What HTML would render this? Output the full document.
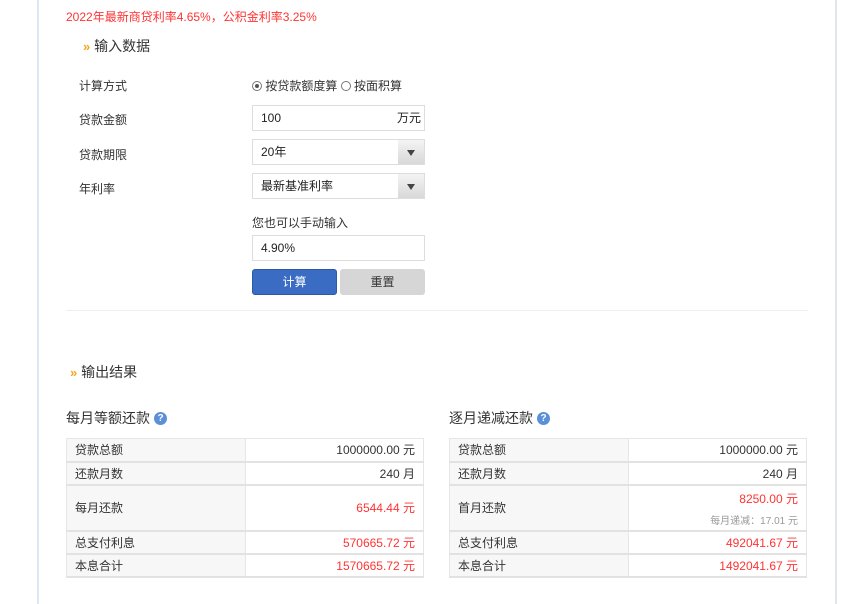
<!DOCTYPE html>
<html><head><meta charset="utf-8"><style>
*{margin:0;padding:0;box-sizing:border-box}
body{width:865px;height:604px;background:#fff;font-family:"Liberation Sans","Noto Sans CJK SC",sans-serif;font-size:12px;color:#333;position:relative;overflow:hidden}
.a{position:absolute;white-space:nowrap}
.vl{position:absolute;top:0;width:2px;height:604px;background:#dde6f1}
.inp{position:absolute;border:1px solid #ddd;background:#fff;height:26px;line-height:24px;padding-left:8px;font-size:12px;color:#222}
.sel .arr{position:absolute;right:0;top:0;width:26px;height:24px;background:linear-gradient(#f4f4f4,#d8d8d8)}
.sel .arr:after{content:"";position:absolute;left:9px;top:10px;border-left:4px solid transparent;border-right:4px solid transparent;border-top:6px solid #444}
.h{font-size:14px;color:#333}
.q{display:inline-block;width:13px;height:13px;border-radius:50%;background:#5b8fd8;color:#fff;font-size:10px;font-weight:bold;text-align:center;line-height:13px;vertical-align:2px;margin-left:4px}
table{position:absolute;border-collapse:collapse;width:358px}
td{border:1px solid #e6e6e6;border-bottom:2px solid #e2e2e2;height:23px;font-size:12px;padding:0 8px}
td:first-child{background:#f7f7f7;width:179px}
td:last-child{text-align:right}
.r{color:#f33}
.s{font-size:10px;color:#999}
</style></head><body>
<div class="vl" style="left:37px"></div>
<div class="vl" style="left:835px"></div>
<div class="a" style="left:66px;top:8px;color:#f33;font-size:12px">2022年最新商贷利率4.65%，公积金利率3.25%</div>
<div class="a h" style="left:83px;top:36px"><span style="color:#f5a623;font-size:13px;font-weight:bold">»</span> 输入数据</div>
<div class="a" style="left:79px;top:77px">计算方式</div>
<div class="a" style="left:252px;top:77px"><span style="display:inline-block;width:10px;height:10px;border:1px solid #777;border-radius:50%;position:relative;vertical-align:-1px"><span style="position:absolute;left:2px;top:2px;width:4px;height:4px;border-radius:50%;background:#555"></span></span> 按贷款额度算 <span style="display:inline-block;width:10px;height:10px;border:1px solid #777;border-radius:50%;vertical-align:-1px"></span> 按面积算</div>
<div class="a" style="left:79px;top:111px">贷款金额</div>
<div class="inp" style="left:252px;top:105px;width:173px">100<span style="position:absolute;right:3px">万元</span></div>
<div class="a" style="left:79px;top:146px">贷款期限</div>
<div class="inp sel" style="left:252px;top:139px;width:173px">20年<span class="arr"></span></div>
<div class="a" style="left:79px;top:180px">年利率</div>
<div class="inp sel" style="left:252px;top:173px;width:173px">最新基准利率<span class="arr"></span></div>
<div class="a" style="left:252px;top:214px">您也可以手动输入</div>
<div class="inp" style="left:252px;top:235px;width:173px">4.90%</div>
<div class="a" style="left:252px;top:269px;width:85px;height:26px;background:#3a6cc4;border:1px solid #2c5aa8;border-radius:3px;color:#fff;text-align:center;line-height:24px">计算</div>
<div class="a" style="left:340px;top:269px;width:85px;height:26px;background:#d6d6d6;border-radius:3px;color:#333;text-align:center;line-height:26px">重置</div>
<div class="a" style="left:66px;top:310px;width:742px;height:1px;background:#eee"></div>
<div class="a h" style="left:70px;top:362px"><span style="color:#f5a623;font-size:13px;font-weight:bold">»</span> 输出结果</div>
<div class="a h" style="left:66px;top:408px">每月等额还款<span class="q">?</span></div>
<div class="a h" style="left:449px;top:408px">逐月递减还款<span class="q">?</span></div>
<table style="left:66px;top:438px">
<tr><td>贷款总额</td><td>1000000.00 元</td></tr>
<tr><td>还款月数</td><td>240 月</td></tr>
<tr><td style="height:46px">每月还款</td><td class="r">6544.44 元</td></tr>
<tr><td>总支付利息</td><td class="r">570665.72 元</td></tr>
<tr><td>本息合计</td><td class="r">1570665.72 元</td></tr>
</table>
<table style="left:449px;top:438px">
<tr><td>贷款总额</td><td>1000000.00 元</td></tr>
<tr><td>还款月数</td><td>240 月</td></tr>
<tr><td style="height:46px">首月还款</td><td><div class="r" style="margin-top:2px">8250.00 元</div><div class="s" style="margin-top:5px">每月递减：17.01 元</div></td></tr>
<tr><td>总支付利息</td><td class="r">492041.67 元</td></tr>
<tr><td>本息合计</td><td class="r">1492041.67 元</td></tr>
</table>
</body></html>
